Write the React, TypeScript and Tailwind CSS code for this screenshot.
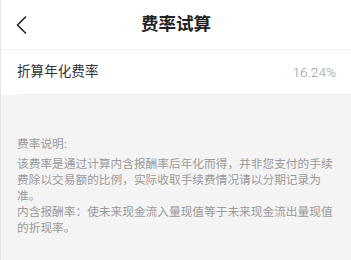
import React from "react";

const font = "font-['Liberation_Sans','Noto_Sans_CJK_SC',sans-serif]";

function BackIcon() {
  return (
    <svg width="12" height="18" viewBox="0 0 12 18" fill="none">
      <path d="M10.5 1 L2.5 9 L10.5 17" stroke="#222" strokeWidth="1.6" strokeLinecap="round" strokeLinejoin="round" />
    </svg>
  );
}

export default function App() {
  return (
    <main className={`${font} flex min-h-[260px] w-[351px] flex-col border-l border-[#e4e4e4] bg-[#f4f4f4]`}>
      <header className="relative flex h-[50px] items-center justify-center border-b border-[#eeeeee] bg-white">
        <button type="button" className="absolute left-[14px] top-[16px] flex">
          <BackIcon />
        </button>
        <h1 className="text-[17.5px] font-bold text-[#222]">费率试算</h1>
      </header>

      <section className="bg-white pl-4">
        <div className="flex h-[45px] items-center justify-between border-b border-[#eeeeee] pr-[15px]">
          <span className="text-[13.6px] text-[#333]">折算年化费率</span>
          <span className="font-['Roboto',sans-serif] text-[13.6px] font-light text-[#999]">16.24%</span>
        </div>
      </section>

      <section className="px-4 pt-[41px] pb-6 text-[11.7px] leading-[16px] text-[#9a9a9a]">
        <p>费率说明:</p>
        <p className="mt-[3.5px]">
          该费率是通过计算内含报酬率后年化而得，并非您支付的手续费除以交易额的比例，实际收取手续费情况请以分期记录为准。
        </p>
        <p>内含报酬率：使未来现金流入量现值等于未来现金流出量现值的折现率。</p>
      </section>
    </main>
  );
}
